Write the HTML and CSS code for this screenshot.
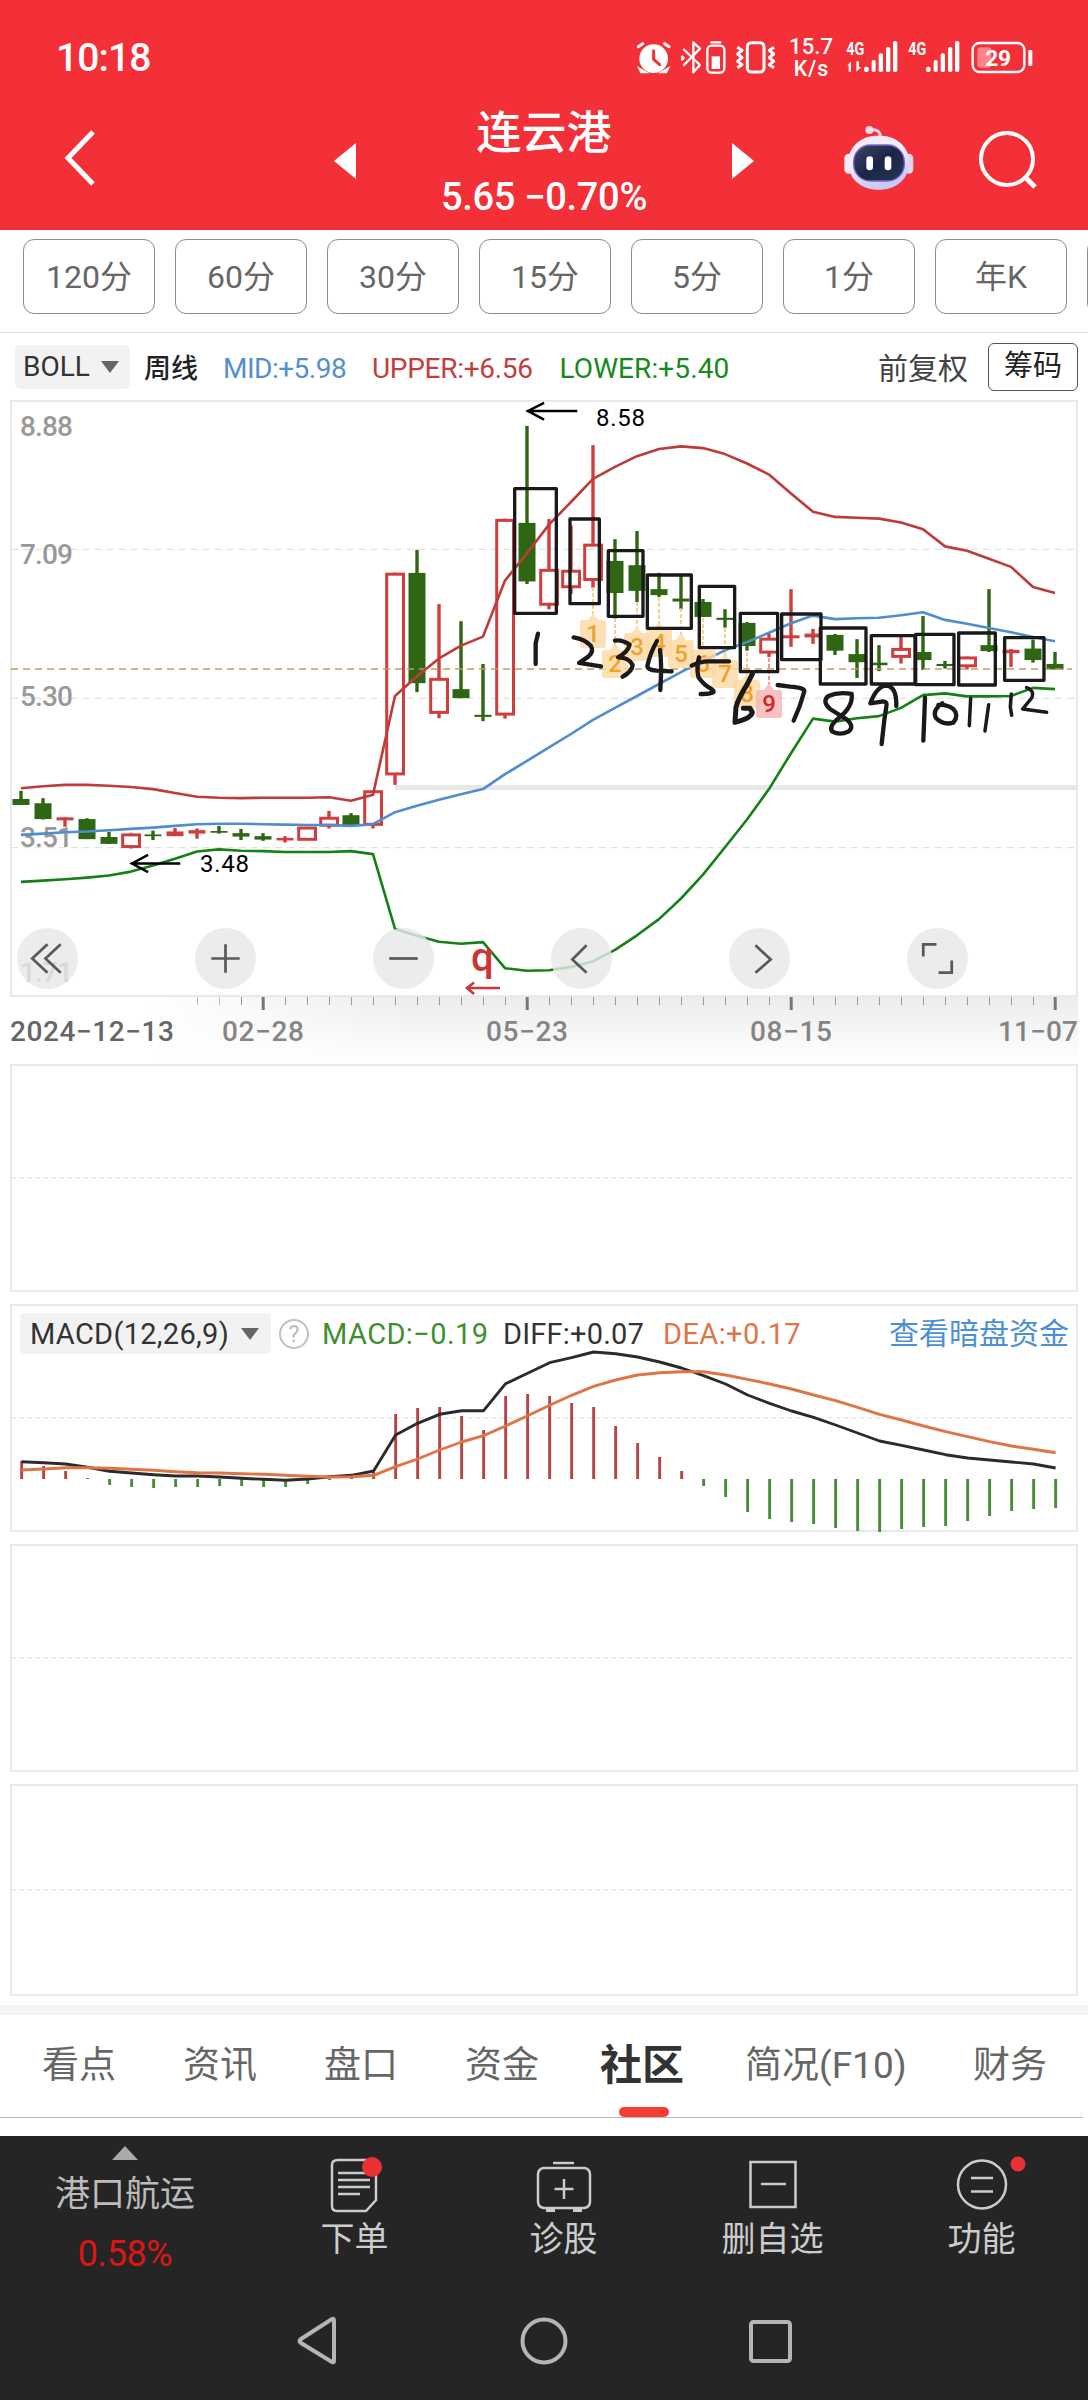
FILE: index.html
```html
<!DOCTYPE html>
<html lang="zh-CN">
<head>
<meta charset="utf-8">
<title>连云港 周线</title>
<link rel="stylesheet" href="styles.css">
</head>
<body>
<header class="header">
  <div class="status">
    <span class="clock">10:18</span>
    <svg class="status-icons" viewBox="0 0 1290 150" width="430" height="50">
      <g fill="#fff">
        <circle cx="71" cy="86" r="43"/>
        <path d="M30 118l14 8-10 0zM98 126l14-8-4 8z" stroke="#fff" stroke-width="8"/>
      </g>
      <g fill="none" stroke="#fff" stroke-width="9" stroke-linecap="round">
        <path d="M25 50l13-9M104 41l13 9"/>
        <path d="M71 62v26l18 16" stroke="#f32f38"/>
      </g>
      <g fill="none" stroke="#fff" stroke-width="7" stroke-linejoin="round">
        <path d="M160 57l50 48-20 22V37l20 19-50 51"/>
        <path d="M154 78l7 6-7 6"/>
        <rect x="232" y="47" width="51" height="81" rx="13"/>
        <path d="M244 37h27" stroke-linecap="round"/>
        <rect x="352" y="38" width="50" height="88" rx="12" stroke-width="9"/>
        <path d="M322 52l14 9-13 11 13 11-13 11 13 10-14 9M432 52l-14 9 13 11-13 11 13 11-13 10 14 9" stroke-width="9"/>
        <rect x="1028" y="39" width="155" height="87" rx="20"/>
      </g>
      <g fill="#fff">
        <rect x="245" y="79" width="25" height="38"/>
        <rect x="1195" y="60" width="12" height="48" rx="4"/>
        <path d="M651 108l12-14v31h-7v-19zM679 94v31l15-14h-7V94z"/>
        <rect x="702" y="110" width="14" height="16" rx="6"/>
        <rect x="725" y="90" width="12" height="36" rx="5"/>
        <rect x="746" y="70" width="13" height="56" rx="5"/>
        <rect x="768" y="51" width="13" height="75" rx="5"/>
        <rect x="789" y="33" width="13" height="93" rx="5"/>
        <rect x="888" y="110" width="14" height="16" rx="6"/>
        <rect x="911" y="90" width="12" height="36" rx="5"/>
        <rect x="932" y="70" width="13" height="56" rx="5"/>
        <rect x="954" y="51" width="13" height="75" rx="5"/>
        <rect x="975" y="33" width="13" height="93" rx="5"/>
      </g>
      <rect x="1042" y="52" width="42" height="61" rx="10" fill="#ff8389"/>
      <g fill="#fff" class="status-text">
        <text x="477" y="73" font-size="66" textLength="132">15.7</text>
        <text x="491" y="137" font-size="64" textLength="104">K/s</text>
        <text x="649" y="74" font-size="56" textLength="54" lengthAdjust="spacingAndGlyphs" font-weight="700">4G</text>
        <text x="835" y="74" font-size="56" textLength="54" lengthAdjust="spacingAndGlyphs" font-weight="700">4G</text>
        <text x="1066" y="107" font-size="68" textLength="77" font-weight="700">29</text>
      </g>
    </svg>
  </div>
  <div class="titlebar">
    <svg class="back" width="40" height="60" viewBox="0 0 40 60"><path d="M33 4L8 30l25 26" fill="none" stroke="#fff" stroke-width="5"/></svg>
    <svg width="22" height="36" viewBox="0 0 22 36"><path d="M22 0v36L0 18z" fill="#fff"/></svg>
    <div class="title">
      <h1>连云港</h1>
      <p>5.65 −0.70%</p>
    </div>
    <svg width="22" height="36" viewBox="0 0 22 36"><path d="M0 0v36l22-18z" fill="#fff"/></svg>
    <svg class="robot" width="70" height="66" viewBox="0 0 210 198">
      <defs>
        <linearGradient id="shell" x1="0" y1="0" x2="0.4" y2="1"><stop offset="0" stop-color="#f7e6f2"/><stop offset=".5" stop-color="#f3eefb"/><stop offset="1" stop-color="#c5caf6"/></linearGradient>
        <linearGradient id="visor" x1="0" y1="0" x2="1" y2="1"><stop offset="0" stop-color="#394868"/><stop offset=".5" stop-color="#1b2547"/><stop offset="1" stop-color="#283655"/></linearGradient>
      </defs>
      <path d="M77 15q32-4 32 20" fill="none" stroke="#f6d6e6" stroke-width="9"/>
      <circle cx="76" cy="15" r="12" fill="#f8d9e8"/>
      <rect x="1" y="86" width="26" height="60" rx="13" fill="#f6eaf6"/>
      <rect x="182" y="86" width="26" height="60" rx="13" fill="#e4d4f2"/>
      <rect x="12" y="32" width="184" height="162" rx="84" fill="url(#shell)"/>
      <rect x="29" y="60" width="152" height="108" rx="50" fill="url(#visor)" stroke="#7d65cf" stroke-width="4"/>
      <rect x="67" y="94" width="20" height="42" rx="10" fill="#fff"/>
      <rect x="122" y="94" width="20" height="42" rx="10" fill="#fff"/>
    </svg>
    <svg class="search" width="60" height="60" viewBox="0 0 60 60"><g fill="none" stroke="#fff" stroke-width="4"><circle cx="30" cy="29" r="26"/><path d="M47 46l11 11" stroke-width="5"/></g></svg>
  </div>
</header>

<nav class="periods">
  <span>120分</span><span>60分</span><span>30分</span><span>15分</span><span>5分</span><span>1分</span><span>年K</span><span></span>
</nav>

<section class="indicator">
  <span class="pick boll">BOLL<i class="caret"></i></span>
  <span class="week">周线</span>
  <span class="mid">MID:+5.98</span>
  <span class="upper">UPPER:+6.56</span>
  <span class="lower">LOWER:+5.40</span>
  <span class="adjust">前复权</span>
  <span class="chips">筹码</span>
</section>

<section class="kline">
  <svg id="kline" width="1088" height="664" viewBox="0 400 1088 664">
    <defs>
      <linearGradient id="fadeY" x1="0" y1="0" x2="0" y2="1"><stop offset="0" stop-color="#ececec"/><stop offset="1" stop-color="#fff"/></linearGradient>
      <linearGradient id="fadeX"><stop offset="0" stop-color="#fff"/><stop offset="1" stop-color="#fff" stop-opacity="0"/></linearGradient>
    </defs>
    <rect x="150" y="997" width="928" height="66" fill="url(#fadeY)"/>
    <rect x="149" y="997" width="260" height="67" fill="url(#fadeX)"/>
    <rect x="11" y="401" width="1066" height="595" fill="#fff" stroke="#e9e9e9" stroke-width="2"/>
    <g stroke="#e2e2e2" stroke-width="1.3" stroke-dasharray="7 5">
      <path d="M11 549.4H1077M11 698.4H1077M11 847.6H1077"/>
    </g>
    <g class="scale">
      <text x="20" y="436" textLength="53">8.88</text>
      <text x="20" y="564" textLength="53">7.09</text>
      <text x="20" y="706" textLength="53">5.30</text>
      <text x="20" y="847" textLength="53">3.51</text>
      <text x="20" y="981.5" textLength="53">1.71</text>
    </g>
    <path d="M395 787.4H1077" stroke="#e8e8e8" stroke-width="5"/>
    <g id="axis"></g>
    <g id="candles"></g>
    <path d="M11 669H1072" stroke="#c39b60" stroke-width="1.4" stroke-dasharray="7 5"/>
    <g id="bands" fill="none" stroke-width="2.6" stroke-linejoin="round"></g>
    <g id="marks"></g>
    <g class="extreme" stroke-linecap="square">
      <path d="M576 411H528M543 403.5L528 411l15 8"/>
      <text x="596" y="425.500" textLength="49">8.58</text>
      <path d="M179 863.5H132M147 855.500L132 863.500l15 8"/>
      <text x="200" y="872" textLength="49">3.48</text>
    </g>
    <text x="471" y="971" class="q">q</text>
    <path d="M500 988H468M474 982.500L467 988l7 6" fill="none" stroke="#cc3535" stroke-width="2.500"/>
    <g class="ink" transform="translate(505 470) scale(.3333)">
      <path d="M29 56h125v374H29zM195 147h88v254h-88zM310 242h104v197H310zM427 315h132v160H427zM583 349h106v184H583zM706 430h112v175H706z"/>
      <g stroke-width="13">
        <path d="M99 491L92 520V582"/>
        <path d="M206 502Q240 508 257 527Q268 544 250 560L222 579L288 589"/>
        <path d="M330 512Q350 508 374 524Q370 545 339 562Q372 562 383 585Q382 605 353 620"/>
        <path d="M456 513Q437 545 427 588Q428 600 455 602L500 604M465 540Q471 580 466 660"/>
        <path d="M582 562Q574 590 580 620Q588 635 608 650Q629 662 625 667Q612 673 587 672M560 587Q590 573 610 574H672"/>
        <path stroke-width="15" d="M743 610L728 640Q698 688 693 712L690 757Q740 745 742 727L735 715H715"/>
      </g>
    </g>
    <g class="ink" transform="translate(725 560) scale(.3333)">
      <path d="M170 162h118v137H170zM286 204h137v168H286zM439 227h131v145H439zM572 223h115v151H572zM701 219h110v156H701zM839 233h118v128H839z"/>
      <g stroke-width="13">
        <path d="M158 375L195 380Q240 383 238 394Q226 440 206 482"/>
        <path d="M380 402Q340 395 310 408Q290 425 315 447L365 478Q390 500 370 515Q345 527 322 515Q310 500 340 475Q385 440 380 402"/>
        <path d="M514 438Q515 380 485 377Q455 378 436 430L475 424Q488 425 484 440L478 480L470 552"/>
        <path d="M600 413L598 470L595 542M652 430Q622 450 632 473Q655 497 685 488Q703 465 685 447Q665 432 640 435"/>
        <path stroke-width="10.500" d="M737 415L733 497M791 434L780 513"/>
        <path stroke-width="10.500" d="M859 402L856 440L860 466M905 383Q930 392 920 414L893 447L965 457"/>
      </g>
    </g>
    <g class="dates">
      <text x="10" y="1041" textLength="164" fill="#666">2024−12−13</text>
      <text x="222" y="1041" textLength="82">02−28</text>
      <text x="486" y="1041" textLength="82">05−23</text>
      <text x="750" y="1041" textLength="82">08−15</text>
      <text x="998" y="1041" textLength="80">11−07</text>
    </g>
  </svg>
  <div class="tools">
    <span><svg viewBox="0 0 60 60"><path d="M30 16L15 30l15 14M43 16L28 30l15 14"/></svg></span>
    <span><svg viewBox="0 0 60 60"><path d="M16 30h28M30 16v28"/></svg></span>
    <span><svg viewBox="0 0 60 60"><path d="M16 30h28"/></svg></span>
    <span><svg viewBox="0 0 60 60"><path d="M35 17L21 31l14 13"/></svg></span>
    <span><svg viewBox="0 0 60 60"><path d="M26 17l15 14-15 13"/></svg></span>
    <span><svg viewBox="0 0 60 60"><path d="M16 28V16h13M44 32v12H31"/></svg></span>
  </div>
</section>

<section class="panel p-volume"></section>

<section class="panel p-macd">
  <div class="macd-head">
    <span class="pick">MACD(12,26,9)<i class="caret"></i></span>
    <svg class="help" width="30" height="32" viewBox="0 0 30 32"><ellipse cx="15" cy="16" rx="14" ry="14" fill="none" stroke="#c0c0c0" stroke-width="2"/><text x="15" y="24" text-anchor="middle" font-size="23" fill="#b8b8b8">?</text></svg>
    <span class="macd">MACD:−0.19</span>
    <span class="diff">DIFF:+0.07</span>
    <span class="dea">DEA:+0.17</span>
    <span class="link">查看暗盘资金</span>
  </div>
  <svg id="macd" width="1064" height="224" viewBox="12 1306 1064 224" overflow="visible"></svg>
</section>

<section class="panel p-third"></section>
<section class="panel p-fourth"></section>

<nav class="tabs">
  <span>看点</span><span>资讯</span><span>盘口</span><span>资金</span><span class="on">社区</span><span>简况(F10)</span><span>财务</span>
</nav>

<footer class="bottom">
  <div class="actions">
    <div class="sector">
      <svg width="26" height="14" viewBox="0 0 26 14"><path d="M13 0l13 14H0z" fill="#aaa"/></svg>
      <span>港口航运</span>
      <b>0.58%</b>
    </div>
    <div class="action">
      <svg width="60" height="64" viewBox="0 0 60 64"><g fill="none" stroke="#ccc" stroke-width="2.500"><path d="M13 10h34q4 0 4 4v36L41 61H12q-5 0-5-5V15q0-5 6-5z"/><path d="M13 23h32M13 30h32M13 37h32M13 44h22"/></g><circle cx="47" cy="17" r="10" fill="#eb3133"/></svg>
      <span>下单</span>
    </div>
    <div class="action">
      <svg width="60" height="64" viewBox="0 0 60 64"><g fill="none" stroke="#ccc" stroke-width="2.500"><rect x="4" y="18" width="52" height="40" rx="6"/><path d="M19 13h21M30 29v20M20.500 39h19"/><path d="M12 60h9M39 60h9" stroke-width="4"/></g></svg>
      <span>诊股</span>
    </div>
    <div class="action">
      <svg width="60" height="64" viewBox="0 0 60 64"><g fill="none" stroke="#ccc" stroke-width="2.500"><rect x="7.500" y="12" width="45" height="45"/><path d="M18 34h25"/></g></svg>
      <span>删自选</span>
    </div>
    <div class="action">
      <svg class="wide" width="90" height="64" viewBox="-15 0 90 64"><g fill="none" stroke="#ccc" stroke-width="2.500"><circle cx="30" cy="34.500" r="24"/><path d="M19 28h22M19 41.500h22"/></g><circle cx="66" cy="14" r="7.500" fill="#eb3133"/></svg>
      <span>功能</span>
    </div>
  </div>
  <div class="system">
    <svg width="50" height="50" viewBox="0 0 50 50"><path d="M41 5v40q0 2-2 1L8 27q-3-2 0-4L39 3q2-1 2 2z"/></svg>
    <svg width="50" height="50" viewBox="0 0 50 50"><circle cx="25" cy="25" r="21.500"/></svg>
    <svg width="50" height="50" viewBox="0 0 50 50"><rect x="6" y="6" width="39" height="39" rx="2.500"/></svg>
  </div>
</footer>
<script src="script.js"></script>
</body>
</html>
```
FILE: styles.css
```css
* { box-sizing: border-box; margin: 0; padding: 0; }
body {
  width: 1088px; height: 2400px; overflow: hidden; background: #fff;
  font-family: Roboto, "Noto Sans CJK SC", sans-serif; color: #333;
}
svg { display: block; }
.header { height: 230px; background: #f32f38; color: #fff; }
.status { display: flex; justify-content: space-between; height: 108px; padding: 30px 28px 0 56px; }
.clock { font-size: 39px; font-weight: 500; line-height: 57px; letter-spacing: -0.9px; }
.status-text { font-family: Roboto, sans-serif; font-weight: 500; }
.titlebar { display: grid; grid-template-columns: 300px 90px 308px 90px 181px 119px; height: 122px; align-items: center; justify-items: center; }
.back { justify-self: start; margin-left: 60px; margin-top: -22px; }
.titlebar > svg { position: relative; top: -8px; }
.titlebar > .back { top: 0; }
.title { text-align: center; align-self: start; white-space: nowrap; }
.title h1 { font-size: 45px; font-weight: 500; line-height: 50px; margin-top: 1px; }
.title p { font-size: 38px; font-weight: 500; line-height: 50px; margin-top: 13px; letter-spacing: -0.3px; }
.titlebar > .robot { top: -11px; }
.titlebar > .search { justify-self: start; margin-left: 8px; top: -9px; }

.periods { display: flex; gap: 20px; height: 103px; padding: 9px 0 0 23px; border-bottom: 1px solid #e4e4e4; overflow: hidden; }
.periods span { flex: 0 0 132px; height: 75px; border: 1px solid #8c8c8c; border-radius: 11px; text-align: center; font-size: 32px; line-height: 74px; color: #666; }

.indicator { display: grid; grid-template-columns: 129px 79px 149px 187.500px 318.500px 110px 90px; height: 67px; align-items: center; font-size: 28px; line-height: 40px; white-space: nowrap; padding: 4px 0 0 15px; }
.pick { display: flex; align-items: center; background: #f2f2f2; border-radius: 5px; color: #333; }
.boll { width: 115px; height: 44px; padding-left: 8px; margin-top: -4px; font-size: 28px; justify-content: space-between; padding-right: 11px; }
.caret { border: 9px solid transparent; border-top: 12px solid #666; border-bottom: 0; }
.week { font-size: 27px; color: #222; font-weight: 500; }
.mid { color: #5390d0; letter-spacing: -0.5px; }
.upper { color: #c13f3f; letter-spacing: -0.3px; }
.lower { color: #17891d; letter-spacing: 0.1px; }
.adjust { font-size: 30px; color: #444; }
.chips { width: 90px; height: 48px; border: 1.500px solid #555; border-radius: 6px; text-align: center; line-height: 44px; font-size: 29px; color: #222; margin-top: -4px; }

.kline { position: relative; height: 664px; }
.kline text { font-family: Roboto, sans-serif; }
.scale text { font-size: 28px; font-weight: 500; fill: #999; }
.dates text { font-size: 28px; font-weight: 500; }
.dates { fill: #858585; }
.extreme path { fill: none; stroke: #000; stroke-width: 2.500; }
.extreme text { font-size: 24px; fill: #000; }
.kline .q { font-size: 40px; font-weight: 500; fill: #cc3535; }
.ink { fill: none; stroke: #1a1a1a; stroke-width: 10; stroke-linejoin: round; stroke-linecap: round; }
.mark { font-size: 24px; font-weight: 500; text-anchor: middle; }
.tools { position: absolute; left: 17px; top: 528px; display: flex; gap: 117px; }
.tools span { width: 61px; height: 61px; border-radius: 50%; background: rgba(232, 232, 232, .82); }
.tools svg { width: 61px; height: 61px; fill: none; stroke: #5a5a5a; stroke-width: 2.700; }

.panel { width: 1068px; margin: 0 0 12px 10px; height: 228px; border: 2px solid #e9e9e9; background: repeating-linear-gradient(90deg, #e8e8e8 0 4px, transparent 4px 8px) 0 50% / 100% 1.500px no-repeat; }
.p-fourth { height: 212px; margin-bottom: 9px; }
.p-macd { display: grid; }
.p-macd > * { grid-area: 1 / 1; }
.macd-head { display: grid; grid-template-columns: 259px 43px 181px 160px 226px auto; height: 40px; margin: 7px 0 0 8px; align-items: center; font-size: 29px; line-height: 40px; white-space: nowrap; }
.macd-head .pick { width: 251px; height: 41px; padding: 0 12px 0 10px; justify-content: space-between; font-size: 29px; letter-spacing: 0.3px; }
.macd { color: #3f8f2f; letter-spacing: 0.4px; }
.diff { color: #333; letter-spacing: 0.2px; }
.dea { color: #dd7547; letter-spacing: 0.4px; }
.link { font-size: 30px; color: #4d8fd4; }

.tabs { display: grid; grid-template-columns: 141px 141px 141px 135px 145px 228px auto; height: 131px; border-top: 10px solid #f4f4f4; padding-left: 42px; align-items: start; font-size: 37px; line-height: 102px; color: #666; white-space: nowrap; background: linear-gradient(#bbb, #bbb) 0 102px / 1083px 1px no-repeat; }
.tabs .on { position: relative; font-size: 42px; font-weight: 700; color: #333; }
.tabs .on::after { content: ""; position: absolute; left: 19px; top: 92px; width: 50px; height: 10px; border-radius: 5px; background: #f63c33; }

.bottom { height: 264px; background: #252525; }
.actions { display: grid; grid-template-columns: 250px 209px 209px 209px 209px; height: 153px; }
.sector { display: flex; flex-direction: column; align-items: center; padding-top: 10px; color: #bbb; font-size: 35px; line-height: 40px; }
.sector span { margin-top: 15px; }
.sector b { font-weight: 400; color: #dc1515; font-size: 36px; margin-top: 19px; letter-spacing: -0.4px; }
.action { display: flex; flex-direction: column; align-items: center; padding-top: 14px; color: #ccc; font-size: 34px; line-height: 40px; }
.action span { margin-top: 5px; }
.system { display: flex; justify-content: center; gap: 176px; padding-top: 27px; }
.system svg { fill: none; stroke: #b5b5b5; stroke-width: 4; }
```
FILE: script.js
```js
const NS = 'http://www.w3.org/2000/svg';
const add = (parent, tag, attrs, text) => {
  const node = document.createElementNS(NS, tag);
  for (const key in attrs) node.setAttribute(key, attrs[key]);
  if (text) node.textContent = text;
  parent.appendChild(node);
  return node;
};
const x = i => 21 + i * 22;
const y = v => 390 + v / 2.34;
const RED = '#cf3d3d', GREEN = '#2f6614';

// [direction, wick top, wick bottom, body top, body bottom]
const candles = [
  ['g',938,971,957,971],['g',955,1005,967,1004],['r',1000,1022,1000,1007],['g',1002,1051,1004,1051],
  ['g',1034,1062,1046,1062],['r',1036,1073,1038,1070],['g',1031,1053,1040,1044],['r',1025,1044,1033,1044],
  ['r',1026,1050,1030,1038],['g',1020,1038,1032,1036],['g',1027,1053,1037,1045],['g',1037,1055,1044,1052],
  ['r',1044,1059,1048,1054],['r',1022,1053,1022,1053],['r',985,1026,999,1020],['g',990,1018,995,1018],
  ['r',936,1026,937,1018],['r',427,924,428,900],['g',374,707,428,686],['r',501,768,674,756],
  ['g',541,721,700,721],['g',641,775,760,765],['r',301,769,302,760],['g',84,454,311,448],
  ['r',302,513,419,503],['r',317,477,421,462],['r',129,463,360,445],['g',349,535,400,475],
  ['g',330,496,410,470],['g',428,484,466,480],['g',430,513,488,495],['g',489,531,496,531],
  ['g',513,556,533,538],['g',543,610,545,599],['r',571,625,580,615],['r',466,601,574,581],
  ['r',559,594,570,579],['g',571,620,573,610],['g',583,674,618,637],['g',597,658,638,644],
  ['r',573,640,604,625],['g',529,655,613,632],['g',634,652,641,646],['r',623,654,624,647],
  ['g',466,613,597,611],['r',606,648,608,616],['g',584,638,605,632],['g',613,654,641,654]
];
const layer = document.getElementById('candles');
candles.forEach(([dir, hi, lo, top, bottom], i) => {
  const color = dir === 'r' ? RED : GREEN;
  const hollow = dir === 'r' && bottom - top > 15;
  const wick = (a, b) => b > a && add(layer, 'rect', { x: x(i) - 1.7, y: y(a), width: 3.4, height: (b - a) / 2.34, fill: color });
  if (hollow) {
    wick(hi, top);
    wick(bottom, lo);
    add(layer, 'rect', { x: x(i) - 8.3, y: y(top) + 1.3, width: 16.8, height: (bottom - top) / 2.34 - 2, fill: 'none', stroke: color, 'stroke-width': 3 });
  } else {
    wick(hi, lo);
    add(layer, 'rect', { x: x(i) - 8.5, y: y(top), width: 17, height: (bottom - top) / 2.34, fill: color });
  }
});

const bands = {
  '#bd3b3b': [932,927,924,924,926,929,934,943,952,954,955,954,954,954,953,961,947,716,670,628,598,577,446,382,315,262,208,180,155,138,132,136,150,172,198,242,285,297,299,301,310,326,366,376,395,414,461,475],
  '#4f8dcf': [1041,1038,1035,1033,1030,1027,1024,1020,1016,1015,1015,1016,1017,1018,1018,1020,1016,988,973,959,946,934,899,868,836,805,772,744,716,688,660,634,609,590,568,546,528,536,534,533,527,520,538,547,557,567,578,588],
  '#168016': [1151,1148,1145,1141,1136,1127,1113,1097,1080,1075,1078,1079,1081,1081,1081,1079,1086,1261,1277,1291,1296,1292,1353,1359,1358,1350,1337,1310,1276,1238,1190,1134,1070,1005,934,850,769,776,768,763,744,714,710,717,717,716,697,700]
};
for (const color in bands) {
  add(document.getElementById('bands'), 'polyline', { stroke: color, points: bands[color].map((v, i) => x(i) + ',' + y(v).toFixed(1)).join(' ') });
}

// nine-count markers: [candle, stem start, tip, box top]
const marks = [[26,587,614,620],[27,618,645,650],[28,602,628,633],[29,597,624,629],[30,608,635,640],[31,618,646,650],[32,628,656,660],[33,652,675,680],[34,658,684,690]];
const markLayer = document.getElementById('marks');
marks.forEach(([i, from, tip, top], n) => {
  const last = n === 8, c = x(i);
  add(markLayer, 'path', { d: `M${c} ${from}V${tip}`, stroke: last ? '#e77' : '#f3c27a', 'stroke-width': 1.6, 'stroke-dasharray': '4 2' });
  add(markLayer, 'path', { d: `M${c - 13} ${top + 3}q0-3 3-3h5l5-7 5 7h5q3 0 3 3v22q0 3-3 3h-20q-3 0-3-3z`, fill: last ? '#f6b4b6' : '#fdd9a4', opacity: 0.82 });
  add(markLayer, 'text', { x: c, y: top + 22, class: 'mark', fill: last ? '#d3262c' : '#f0a02c' }, String(n + 1));
});

const axis = document.getElementById('axis');
for (let i = 8; i < 48; i++) {
  const major = i % 12 === 11;
  add(axis, 'rect', { x: x(i) - (major ? 1.3 : 0), y: 997, width: major ? 3 : 1, height: major ? 13 : 8, fill: major ? '#777' : '#999', opacity: i < 10 ? 0.6 : 1 });
}

const bars = [-18,-13,-8,-1,6,8,9,8,8,7,7,8,8,5,1,-1,-7,-65,-71,-72,-63,-49,-83,-85,-83,-76,-72,-53,-36,-22,-8,7,18,33,40,43,45,49,52,53,50,48,47,42,37,32,30,29];
const diff = [515,518,522,532,544,549,554,558,558,561,565,568,571,567,560,556,543,435,400,373,362,362,281,250,218,203,186,191,201,216,234,257,282,315,340,363,382,405,429,453,466,480,494,504,510,516,522,534];
const dea = [540,537,533,533,535,538,541,545,548,549,551,553,556,559,561,560,556,530,507,480,456,437,408,377,346,316,289,270,255,248,245,245,255,268,282,297,315,332,352,373,390,408,425,440,455,468,478,488];
const macd = document.getElementById('macd');
bars.forEach((v, i) => add(macd, 'rect', { x: x(i) - 0.8, y: 1479 + Math.min(v, 0), width: 2.9, height: Math.abs(v), fill: v < 0 ? '#b54545' : '#488d38' }));
[[diff, '#2b2b2b'], [dea, '#dd7547']].forEach(([series, stroke]) =>
  add(macd, 'polyline', { fill: 'none', stroke, 'stroke-width': 2.9, 'stroke-linejoin': 'round', points: series.map((v, i) => (x(i) + 0.6) + ',' + (1290 + v / 3).toFixed(1)).join(' ') }));
```
